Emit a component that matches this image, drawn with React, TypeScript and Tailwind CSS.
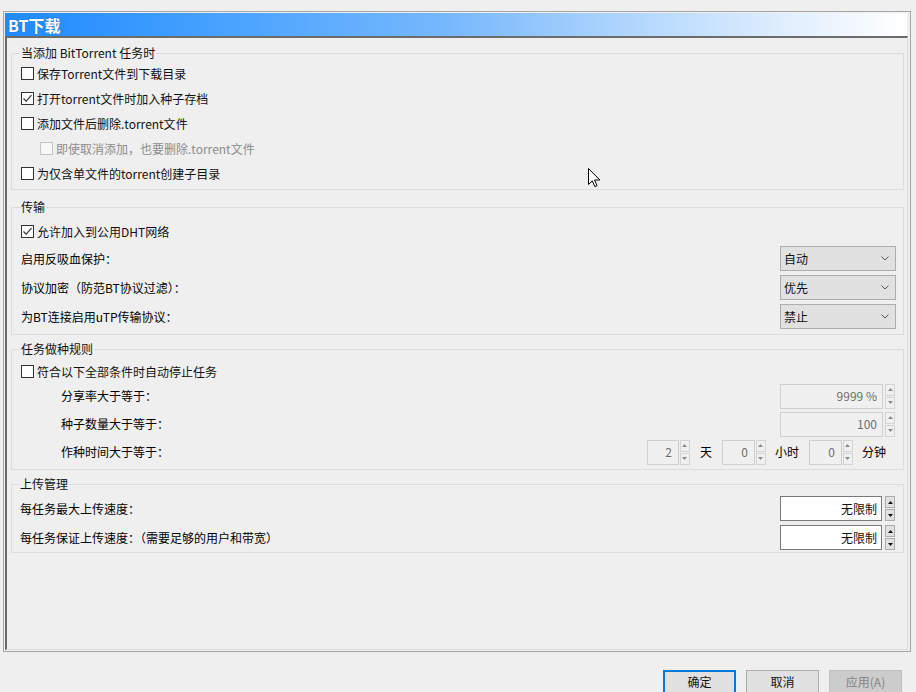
import React from "react";

function Check({ checked, disabled }: { checked?: boolean; disabled?: boolean }) {
  return (
    <div
      className={`w-[13px] h-[13px] border flex items-center justify-center shrink-0 ${
        disabled ? "border-[#c4c4c4] bg-[#f7f7f7]" : "border-[#333333] bg-white"
      }`}
    >
      {checked && (
        <svg width="11" height="11" viewBox="0 0 11 11">
          <path d="M1.5 5.5 L4.2 8.2 L9.5 2.2" stroke="#333" strokeWidth="1.2" fill="none" />
        </svg>
      )}
    </div>
  );
}

function CheckRow({
  label,
  checked,
  disabled,
  indent,
  h = "h-[25px]",
}: {
  label: string;
  checked?: boolean;
  disabled?: boolean;
  indent?: boolean;
  h?: string;
}) {
  return (
    <div className={`flex items-center ${h} ${indent ? "pl-[19px]" : ""}`}>
      <Check checked={checked} disabled={disabled} />
      <span className={`ml-[3px] ${disabled ? "text-[#8c8c8c]" : "text-[#111]"}`}>{label}</span>
    </div>
  );
}

function SpinBtns({ dark }: { dark?: boolean }) {
  const box = dark ? "border-[#adadad] bg-[#e1e1e1]" : "border-[#d4d4d4] bg-[#f0f0f0]";
  const fill = dark ? "#111" : "#8a8a8a";
  return (
    <div className="flex flex-col w-[10px] h-[25px] gap-[1px] shrink-0">
      <div className={`flex-1 border ${box} flex items-center justify-center`}>
        <svg width="5" height="3" viewBox="0 0 5 3">
          <path d="M2.5 0 L5 3 L0 3Z" fill={fill} />
        </svg>
      </div>
      <div className={`flex-1 border ${box} flex items-center justify-center`}>
        <svg width="5" height="3" viewBox="0 0 5 3">
          <path d="M0 0 L5 0 L2.5 3Z" fill={fill} />
        </svg>
      </div>
    </div>
  );
}

function Select({ value }: { value: string }) {
  return (
    <div className="w-[116px] h-[25px] border border-[#adadad] bg-[#e1e1e1] flex items-center pl-[3px] pr-[6px]">
      <span className="flex-1 text-[#111]">{value}</span>
      <svg width="8" height="5" viewBox="0 0 8 5">
        <path d="M0.5 0.5 L4 4 L7.5 0.5" stroke="#555" strokeWidth="1" fill="none" />
      </svg>
    </div>
  );
}

function Legend({ children }: { children: React.ReactNode }) {
  return <legend className="ml-[-1px] px-[1px] leading-[16px] text-[#111]">{children}</legend>;
}

export default function App() {
  return (
    <div className="relative w-[916px] h-[692px] bg-[#efefef] overflow-hidden font-['Noto_Sans_CJK_SC',sans-serif] text-[12px] leading-[16px]">
      <div className="ml-[3px] mt-[11px] w-[908px] h-[641px] border border-[#a5a5a5] flex flex-col pl-[1px] pr-[2px] pt-[1px] pb-[1px]">
        <div className="h-[23px] w-[902px] bg-[linear-gradient(to_right,#1d8aff_0%,#4aa3ff_25%,#79b9fc_50%,#b8dafd_72%,#e4f0fe_88%,#ffffff_100%)] flex items-center pl-[3px]">
          <span className="text-white font-bold text-[16px] leading-[20px] [text-shadow:0_0_1px_#3a5a8a]">BT下载</span>
        </div>
        <div className="flex-1 border-t-2 border-l-2 border-t-[#6b6b6b] border-l-[#6b6b6b] border-r border-b border-r-[#dcdcdc] border-b-[#dcdcdc] pl-[4px] pt-[7px]">
          {/* Group 1 */}
          <fieldset className="w-[893px] border border-[#dcdcdc] pl-[9px] pb-[3px]">
            <Legend>当添加 BitTorrent 任务时</Legend>
            <CheckRow label="保存Torrent文件到下载目录" />
            <CheckRow label="打开torrent文件时加入种子存档" checked />
            <CheckRow label="添加文件后删除.torrent文件" />
            <CheckRow label="即使取消添加，也要删除.torrent文件" disabled indent />
            <CheckRow label="为仅含单文件的torrent创建子目录" />
          </fieldset>

          {/* Group 2 */}
          <fieldset className="mt-[9px] w-[893px] border border-[#dcdcdc] pl-[9px] pr-[7px] pt-[4px] pb-[3px]">
            <Legend>传输</Legend>
            <CheckRow label="允许加入到公用DHT网络" checked />
            <div className="flex items-center justify-between h-[29px]">
              <span>启用反吸血保护：</span>
              <Select value="自动" />
            </div>
            <div className="flex items-center justify-between h-[29px]">
              <span>协议加密（防范BT协议过滤）：</span>
              <Select value="优先" />
            </div>
            <div className="flex items-center justify-between h-[29px]">
              <span>为BT连接启用uTP传输协议：</span>
              <Select value="禁止" />
            </div>
          </fieldset>

          {/* Group 3 */}
          <fieldset className="mt-[6px] w-[893px] border border-[#dcdcdc] pl-[9px] pr-[8px] pt-[4px] pb-[3px]">
            <Legend>任务做种规则</Legend>
            <CheckRow label="符合以下全部条件时自动停止任务" h="h-[21px]" />
            <div className="flex items-center h-[28px] pl-[40px]">
              <span className="flex-1">分享率大于等于：</span>
              <div className="w-[103px] h-[25px] border border-[#cfcfcf] bg-[#f0f0f0] text-[#6d6d6d] flex items-center justify-end pr-[5px]">
                9999 %
              </div>
              <div className="ml-[2px]">
                <SpinBtns />
              </div>
            </div>
            <div className="flex items-center h-[28px] pl-[40px]">
              <span className="flex-1">种子数量大于等于：</span>
              <div className="w-[103px] h-[25px] border border-[#cfcfcf] bg-[#f0f0f0] text-[#6d6d6d] flex items-center justify-end pr-[5px]">
                100
              </div>
              <div className="ml-[2px]">
                <SpinBtns />
              </div>
            </div>
            <div className="flex items-center h-[28px] pl-[40px]">
              <span className="flex-1">作种时间大于等于：</span>
              <div className="flex items-center mr-[9px]">
                <div className="w-[32px] h-[25px] border border-[#cfcfcf] bg-[#f0f0f0] text-[#6d6d6d] flex items-center justify-end pr-[6px]">
                  2
                </div>
                <div className="ml-[1px]">
                  <SpinBtns />
                </div>
                <span className="ml-[10px] w-[12px]">天</span>
                <div className="ml-[10px] w-[33px] h-[25px] border border-[#cfcfcf] bg-[#f0f0f0] text-[#6d6d6d] flex items-center justify-end pr-[6px]">
                  0
                </div>
                <div className="ml-[1px]">
                  <SpinBtns />
                </div>
                <span className="ml-[9px]">小时</span>
                <div className="ml-[10px] w-[33px] h-[25px] border border-[#cfcfcf] bg-[#f0f0f0] text-[#6d6d6d] flex items-center justify-end pr-[6px]">
                  0
                </div>
                <div className="ml-[1px]">
                  <SpinBtns />
                </div>
                <span className="ml-[9px]">分钟</span>
              </div>
            </div>
          </fieldset>

          {/* Group 4 */}
          <fieldset className="mt-[6px] w-[893px] border border-[#dcdcdc] pl-[8px] pr-[8px] pt-[2px]">
            <Legend>上传管理</Legend>
            <div className="flex items-center h-[29px]">
              <span className="flex-1">每任务最大上传速度：</span>
              <div className="w-[102px] h-[25px] border border-[#7a7a7a] bg-white text-[#111] flex items-center justify-end pr-[4px]">
                无限制
              </div>
              <div className="ml-[3px]">
                <SpinBtns dark />
              </div>
            </div>
            <div className="flex items-center h-[29px]">
              <span className="flex-1">每任务保证上传速度：（需要足够的用户和带宽）</span>
              <div className="w-[102px] h-[25px] border border-[#7a7a7a] bg-white text-[#111] flex items-center justify-end pr-[4px]">
                无限制
              </div>
              <div className="ml-[3px]">
                <SpinBtns dark />
              </div>
            </div>
          </fieldset>
        </div>
      </div>

      {/* Bottom buttons */}
      <div className="flex justify-end gap-[10px] mt-[18px] pr-[14px]">
        <div className="w-[73px] h-[24px] border-2 border-[#0078d7] bg-[#e1e1e1] flex items-center justify-center text-[#111]">
          确定
        </div>
        <div className="w-[73px] h-[24px] border border-[#adadad] bg-[#e1e1e1] flex items-center justify-center text-[#111]">
          取消
        </div>
        <div className="w-[73px] h-[24px] border border-[#bfbfbf] bg-[#cccccc] flex items-center justify-center text-[#838383]">
          应用(A)
        </div>
      </div>

      {/* Mouse cursor */}
      <svg className="absolute left-[588px] top-[168px]" width="13" height="20" viewBox="0 0 13 20">
        <path
          d="M0.5 0.5 L0.5 16.5 L4.3 12.8 L6.8 18.6 L9 17.7 L6.6 12 L11.8 12 Z"
          fill="#fff"
          stroke="#000"
          strokeWidth="1"
          strokeLinejoin="miter"
        />
      </svg>
    </div>
  );
}
